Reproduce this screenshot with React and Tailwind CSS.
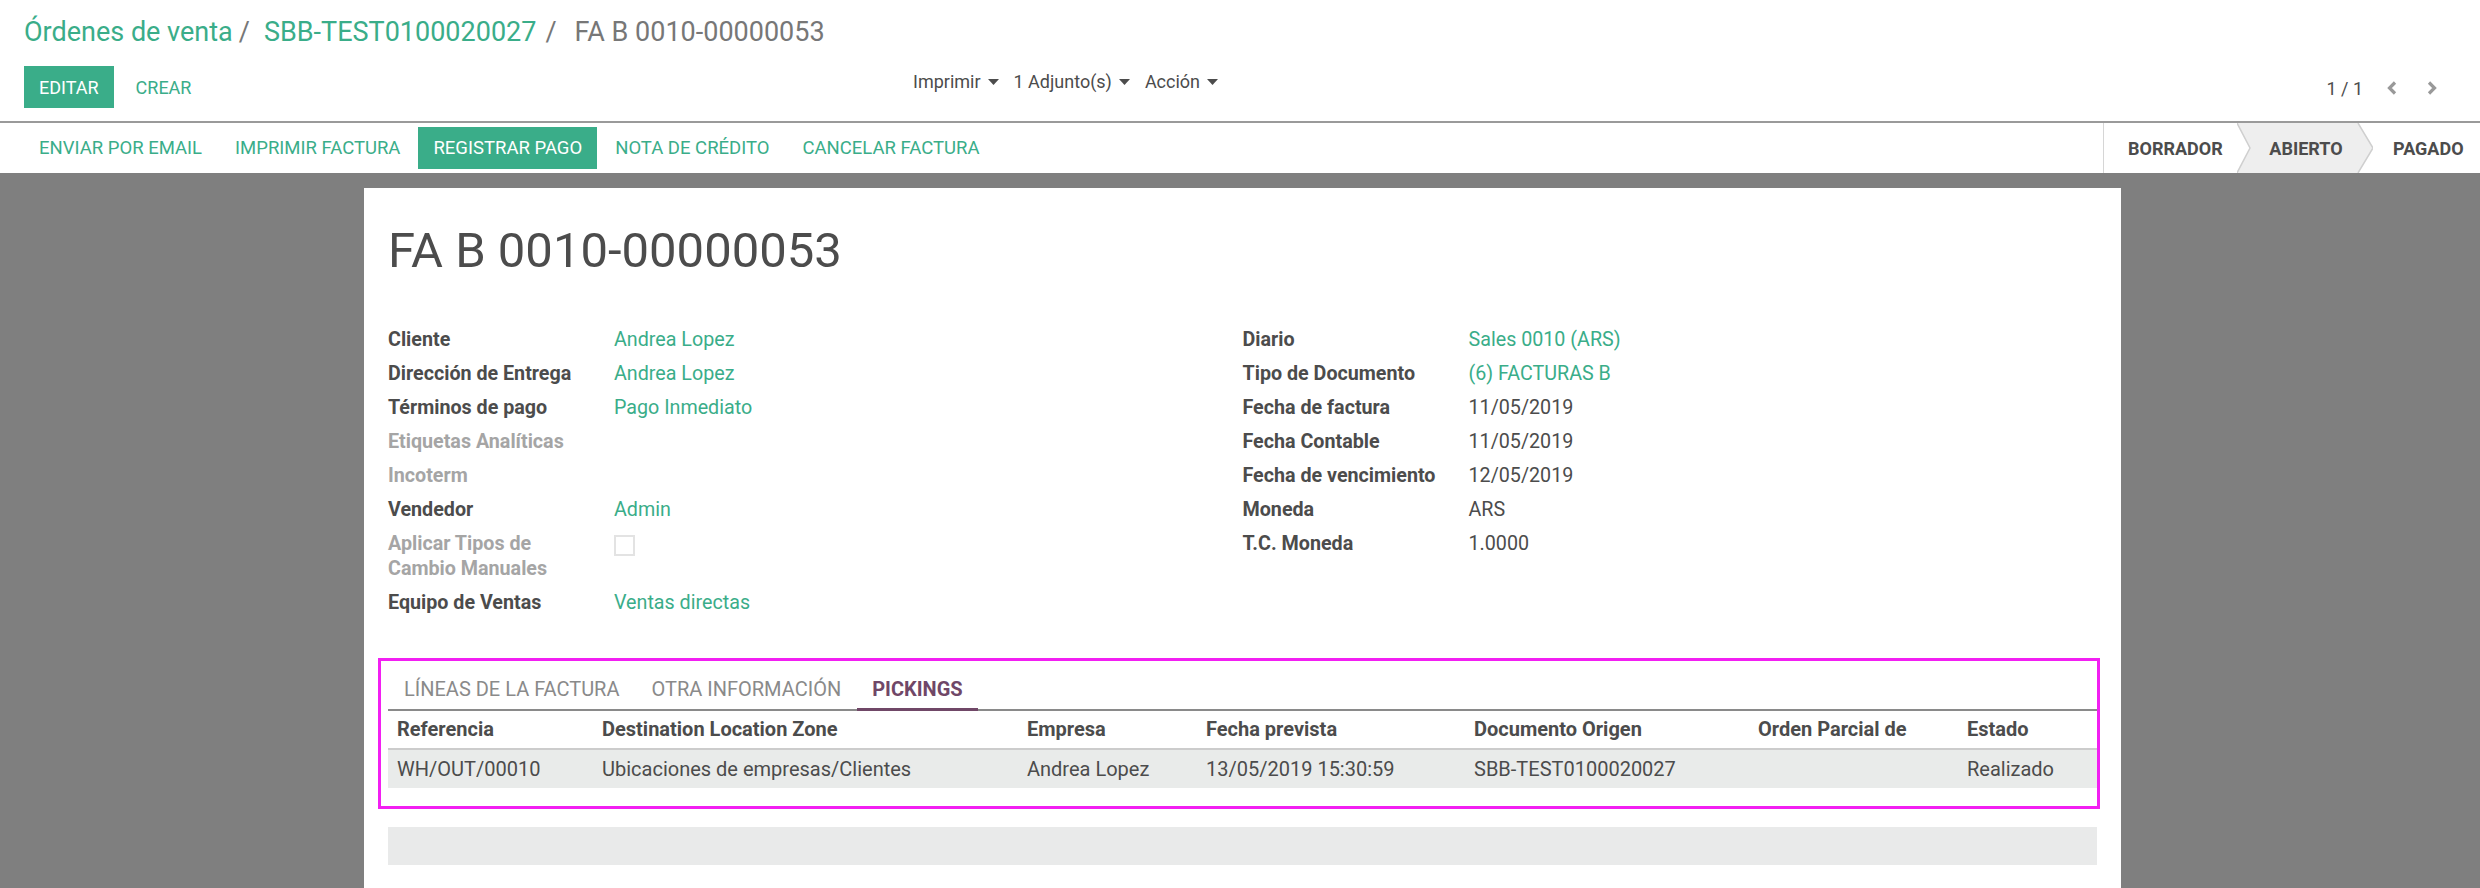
import React from "react";

function Caret() {
  return (
    <svg width="11" height="6" viewBox="0 0 11 6" className="ml-[7px] inline-block">
      <polygon points="0,0 11,0 5.5,6" fill="#4c4c4c" />
    </svg>
  );
}

function Chevron({ dir }) {
  return (
    <svg width="12" height="16" viewBox="0 0 12 16">
      {dir === "left" ? (
        <polyline points="9,2.5 3.5,8 9,13.5" fill="none" stroke="#999" strokeWidth="3.2" />
      ) : (
        <polyline points="3,2.5 8.5,8 3,13.5" fill="none" stroke="#999" strokeWidth="3.2" />
      )}
    </svg>
  );
}

function ControlPanel() {
  return (
    <div className="h-[123px] bg-white border-b-2 border-[#9a9a9a] px-[24px] pt-[16px]">
      {/* breadcrumb */}
      <div className="h-[32px] text-[27px] leading-[32px] whitespace-nowrap">
        <span className="text-[#3aad89]">Órdenes de venta</span>
        <span className="text-[#777] pl-[6px] pr-[14px]">/</span>
        <span className="text-[#3aad89]">SBB-TEST0100020027</span>
        <span className="text-[#777] pl-[9px] pr-[18px]">/</span>
        <span className="text-[#777]">FA B 0010-00000053</span>
      </div>

      <div className="mt-[18px] flex h-[42px]">
        <div className="flex w-[889px] items-start gap-[7px]">
          <button className="h-[42px] px-[15px] bg-[#3aad89] text-white text-[18px] leading-[25px]">
            EDITAR
          </button>
          <button className="h-[42px] px-[15px] text-[#3aad89] text-[18px] leading-[25px]">
            CREAR
          </button>
        </div>
        <div className="flex items-start gap-[15px] pt-[3px] text-[18px] leading-[25px] text-[#4c4c4c]">
          <div className="flex items-center">Imprimir<Caret /></div>
          <div className="flex items-center">1 Adjunto(s)<Caret /></div>
          <div className="flex items-center">Acción<Caret /></div>
        </div>
        <div className="ml-auto flex items-center pt-[2px] pr-[18px] text-[18px] leading-[25px] text-[#4c4c4c]">
          <span>1 / 1</span>
          <span className="ml-[23px] flex"><Chevron dir="left" /></span>
          <span className="ml-[28px] flex"><Chevron dir="right" /></span>
        </div>
      </div>
    </div>
  );
}

function StatusBar() {
  const actions = ["ENVIAR POR EMAIL", "IMPRIMIR FACTURA", "REGISTRAR PAGO", "NOTA DE CRÉDITO", "CANCELAR FACTURA"];
  return (
    <div className="h-[50px] bg-white flex items-center">
      <div className="flex items-center gap-[3px] pl-[24px]">
        {actions.map((a) =>
          a === "REGISTRAR PAGO" ? (
            <button key={a} className="h-[42px] px-[15px] bg-[#3aad89] text-white text-[18.5px] leading-[25px]">
              {a}
            </button>
          ) : (
            <button key={a} className="h-[42px] px-[15px] text-[#3aad89] text-[18.5px] leading-[25px]">
              {a}
            </button>
          )
        )}
      </div>

      {/* estados */}
      <div className="ml-auto w-[377px] self-stretch flex items-stretch border-l border-[#d6d6d6] text-[18px] font-bold text-[#4c4c4c]">
        <div className="w-[133px] pl-[24px] flex items-center">BORRADOR</div>
        <div className="relative w-[136px] flex items-center justify-center">
          <svg className="absolute inset-0" width="136" height="50" viewBox="0 0 136 50">
            <polygon points="0,0 121,0 136,25 121,50 0,50 13,25" fill="#eeeeee" />
            <polyline points="0,0 13,25 0,50" fill="none" stroke="#cfcfcf" strokeWidth="1.5" />
            <polyline points="121,0 136,25 121,50" fill="none" stroke="#cfcfcf" strokeWidth="1.5" />
          </svg>
          <span className="relative pl-[2px]">ABIERTO</span>
        </div>
        <div className="pl-[20px] flex items-center">PAGADO</div>
      </div>
    </div>
  );
}

function Field({ label, value, muted, link, multi, checkbox }) {
  return (
    <>
      <div
        className={
          muted
            ? "pb-[9px] leading-[25px] font-bold text-[#a5a5a5]"
            : "pb-[9px] leading-[25px] font-bold text-[#4c4c4c]"
        }
      >
        {multi ? multi.map((l) => <div key={l}>{l}</div>) : label}
      </div>
      <div className={link ? "pb-[9px] leading-[25px] text-[#3aad89]" : "pb-[9px] leading-[25px] text-[#4c4c4c]"}>
        {checkbox ? <div className="mt-[4px] w-[21px] h-[21px] border-2 border-[#e3e3e3] bg-white" /> : value}
      </div>
    </>
  );
}

function Sheet() {
  const cols = [
    "Referencia",
    "Destination Location Zone",
    "Empresa",
    "Fecha prevista",
    "Documento Origen",
    "Orden Parcial de",
    "Estado",
  ];
  const row = [
    "WH/OUT/00010",
    "Ubicaciones de empresas/Clientes",
    "Andrea Lopez",
    "13/05/2019 15:30:59",
    "SBB-TEST0100020027",
    "",
    "Realizado",
  ];
  return (
    <div className="w-[1757px] h-[700px] bg-white px-[24px] pt-[35px] text-[#4c4c4c]">
      <h1 className="text-[49px] leading-[56px]">FA B 0010-00000053</h1>

      {/* grupos */}
      <div className="mt-[48px] grid grid-cols-2 text-[19.7px]">
        <div className="grid grid-cols-[226px_1fr] content-start">
          <Field label="Cliente" value="Andrea Lopez" link />
          <Field label="Dirección de Entrega" value="Andrea Lopez" link />
          <Field label="Términos de pago" value="Pago Inmediato" link />
          <Field label="Etiquetas Analíticas" value="" muted />
          <Field label="Incoterm" value="" muted />
          <Field label="Vendedor" value="Admin" link />
          <Field multi={["Aplicar Tipos de", "Cambio Manuales"]} muted checkbox />
          <Field label="Equipo de Ventas" value="Ventas directas" link />
        </div>
        <div className="grid grid-cols-[226px_1fr] content-start">
          <Field label="Diario" value="Sales 0010 (ARS)" link />
          <Field label="Tipo de Documento" value="(6) FACTURAS B" link />
          <Field label="Fecha de factura" value="11/05/2019" />
          <Field label="Fecha Contable" value="11/05/2019" />
          <Field label="Fecha de vencimiento" value="12/05/2019" />
          <Field label="Moneda" value="ARS" />
          <Field label="T.C. Moneda" value="1.0000" />
        </div>
      </div>

      {/* notebook */}
      <div className="mt-[34px] ml-[-10px] mr-[-3px] border-[3px] border-[#f21ff2] pl-[7px] pb-[18px] text-[20px]">
        <div className="flex border-b-2 border-[#8a8a8a]">
          <div className="px-[16px] pt-[16px] pb-[6px] leading-[25px] text-[#8a8a8a] border-b-[3px] border-transparent -mb-[2px]">
            LÍNEAS DE LA FACTURA
          </div>
          <div className="px-[16px] pt-[16px] pb-[6px] leading-[25px] text-[#8a8a8a] border-b-[3px] border-transparent -mb-[2px]">
            OTRA INFORMACIÓN
          </div>
          <div className="px-[15px] pt-[16px] pb-[6px] leading-[25px] font-bold text-[#704767] border-b-[3px] border-[#704767] -mb-[2px]">
            PICKINGS
          </div>
        </div>

        <div className="grid grid-cols-[205px_425px_179px_268px_284px_209px_139px]">
          {cols.map((c) => (
            <div key={c} className="pl-[9px] pr-[6px] pt-[6px] pb-[6px] leading-[25px] font-bold border-b-2 border-[#cccccc] whitespace-nowrap">
              {c}
            </div>
          ))}
          {row.map((c, i) => (
            <div key={i} className="pl-[9px] pr-[6px] pt-[7px] pb-[6px] leading-[25px] bg-[#e9ebea] whitespace-nowrap">
              {c}
            </div>
          ))}
        </div>
      </div>

      <div className="mt-[18px] h-[38px] bg-[#e9eaea]" />
    </div>
  );
}

export default function App() {
  return (
    <div className="h-[888px] overflow-hidden bg-[#7f7f7f] font-['Roboto',sans-serif] text-[#4c4c4c]">
      <ControlPanel />
      <StatusBar />
      <div className="pt-[15px] pl-[5px] flex justify-center">
        <Sheet />
      </div>
    </div>
  );
}
